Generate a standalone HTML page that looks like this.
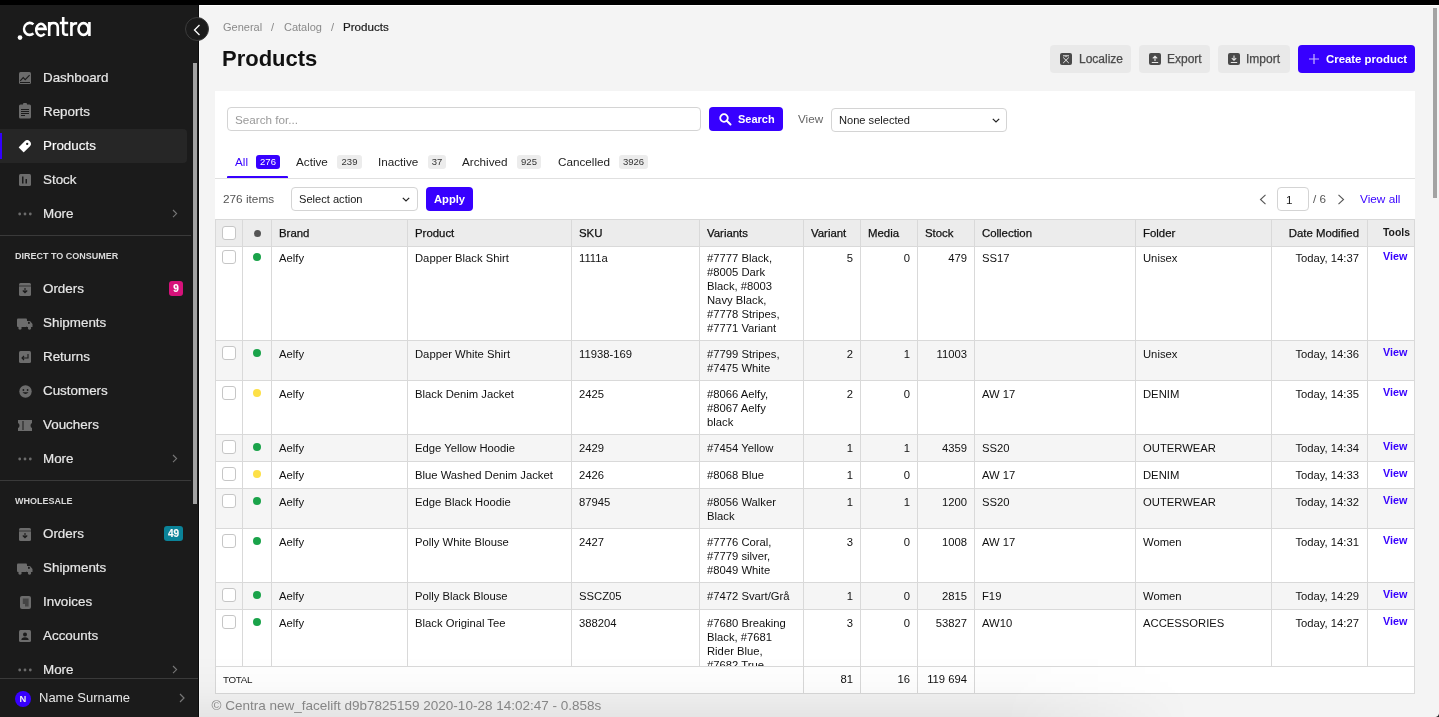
<!DOCTYPE html>
<html><head><meta charset="utf-8"><style>
*{box-sizing:border-box;margin:0;padding:0}
html,body{width:1439px;height:717px;overflow:hidden;background:#f4f4f4;font-family:"Liberation Sans",sans-serif;position:relative}
.a{position:absolute;white-space:nowrap}
#topbar{position:absolute;left:0;top:0;width:1439px;height:5px;background:#000;z-index:50}
#side{position:absolute;left:0;top:0;width:198px;height:717px;background:#1b1b1b;overflow:hidden}
#sideedge{position:absolute;left:198px;top:0;width:1px;height:717px;background:#0c0c0c}
.logo{position:absolute;left:17px;top:13px;color:#fff;font-size:23px;letter-spacing:-0.5px}
.it{position:absolute;left:0;width:187px;height:34px;color:#e6e6e6;font-size:13px;-webkit-text-stroke:0.2px #e6e6e6}
.it .t{position:absolute;left:43px;top:10px;line-height:16px;font-size:13.4px}
.it svg.ic{position:absolute;left:19px;top:12px}
.it.act{background:#262626;border-radius:0 4px 4px 0;color:#fff}
.it.act:before{content:"";position:absolute;left:0;top:4px;width:2px;height:26px;background:#3300ff}
.chev{position:absolute;left:172px;top:12px}
.sep{position:absolute;left:0;width:191px;height:1px;background:#3a3a3a}
.sh{position:absolute;left:15px;font-size:9px;font-weight:700;color:#dadada;line-height:12px}
.badge{position:absolute;top:10px;height:15px;border-radius:3px;color:#fff;font-size:10px;font-weight:700;text-align:center;line-height:15px}
#sscroll{position:absolute;left:193px;top:63px;width:4px;height:441px;background:#a3a3a3}
#collapse{position:absolute;left:185px;top:16.5px;width:24px;height:24px;border-radius:50%;background:#1b1b1b;border:1px solid #3c3c3c;z-index:20}
#user{position:absolute;left:0;top:678px;width:198px;height:39px;background:#1b1b1b;border-top:1px solid #3a3a3a}

#main{position:absolute;left:199px;top:5px;width:1240px;height:712px;background:#f4f4f4;border-top:1px solid #fff;border-left:1px solid #fafafa}
.bc{position:absolute;top:20px;font-size:11px;color:#8a8a8a;line-height:14px}
.title{position:absolute;left:222px;top:46px;font-size:22px;font-weight:700;color:#111;line-height:26px}
.hbtn{position:absolute;top:45px;height:28px;border-radius:4px;background:#e9e9e9;color:#4a4a4a;font-size:12px;line-height:29px;-webkit-text-stroke:0.25px #4a4a4a}
.hbtn svg{position:absolute;left:10px;top:8px}
.hbtn span{position:absolute;top:0}
.card{position:absolute;left:215px;top:91px;width:1200px;height:603px;background:#fff}
.inp{position:absolute;border:1px solid #d4d4d4;border-radius:4px;background:#fff}
.bbtn{position:absolute;background:#3700ff;border-radius:4px;color:#fff;font-weight:700}
.tab{position:absolute;top:154px;font-size:11.7px;color:#222;line-height:15px}
.tbadge{position:absolute;top:155px;height:14px;border-radius:3px;font-size:9.5px;line-height:14px;text-align:center;background:#ececec;color:#333}
.grid{position:absolute;left:215px;top:219px;width:1200px;height:474px;overflow:hidden}
.c{position:absolute;font-size:11.25px;line-height:14px;color:#111;white-space:nowrap}
.r{text-align:right}
.vl{position:absolute;width:1px;background:#d9d9d9}
.hl{position:absolute;height:1px;background:#d9d9d9}
.cb{position:absolute;width:14px;height:14px;border:1px solid #c6c6c6;border-radius:3px;background:#fff}
.dot{position:absolute;width:8px;height:8px;border-radius:50%}
</style></head><body><div id="wrap" style="position:absolute;left:0;top:0;width:1439px;height:717px;will-change:transform">
<div id="main"></div>
<div class="a" style="left:1433px;top:8px;width:4px;height:190px;background:#a3a3a3;z-index:30"></div>
<div class="bc" style="left:223px">General</div>
<div class="bc" style="left:271px">/</div>
<div class="bc" style="left:284px">Catalog</div>
<div class="bc" style="left:331px">/</div>
<div class="bc" style="left:343px;color:#1a1a1a;font-size:11.6px;-webkit-text-stroke:0.2px #1a1a1a">Products</div>
<div class="title">Products</div>
<div class="hbtn" style="left:1050px;width:81px"><svg width="12" height="12" viewBox="0 0 12 12"><rect width="12" height="12" rx="2" fill="#4a4a4a"/><path d="M3 2.8 H9 M6 2.8 V4.2 M3.2 10 L8.8 4.5 M3.2 4.5 L8.8 10" stroke="#e9e9e9" stroke-width="1" fill="none"/></svg><span style="left:29px">Localize</span></div>
<div class="hbtn" style="left:1139px;width:71px"><svg width="12" height="12" viewBox="0 0 12 12"><rect width="12" height="12" rx="2" fill="#4a4a4a"/><path d="M6 8 V3.2 M3.8 5.4 L6 3.2 L8.2 5.4 M2.8 9.5 H9.2" stroke="#e9e9e9" stroke-width="1.1" fill="none"/></svg><span style="left:28px">Export</span></div>
<div class="hbtn" style="left:1218px;width:72px"><svg width="12" height="12" viewBox="0 0 12 12"><rect width="12" height="12" rx="2" fill="#4a4a4a"/><path d="M6 2.5 V7.3 M3.8 5.1 L6 7.3 L8.2 5.1 M2.8 9.5 H9.2" stroke="#e9e9e9" stroke-width="1.1" fill="none"/></svg><span style="left:28px">Import</span></div>
<div class="bbtn" style="left:1298px;top:45px;width:117px;height:28px"><svg class="a" style="left:11px;top:9px" width="10" height="10" viewBox="0 0 10 10"><path d="M5 0 V10 M0 5 H10" stroke="#c8b8ff" stroke-width="1.2"/></svg><span class="a" style="left:28px;top:7px;font-size:11.4px;line-height:14px">Create product</span></div>
<div class="card"></div>
<div class="inp" style="left:227px;top:107px;width:474px;height:24px"><span class="a" style="left:7px;top:3.5px;font-size:11.7px;color:#9a9a9a;line-height:15px">Search for...</span></div>
<div class="bbtn" style="left:709px;top:107px;width:74px;height:24px"><svg class="a" style="left:10px;top:6px" width="13" height="13" viewBox="0 0 13 13"><circle cx="5" cy="5" r="3.8" fill="none" stroke="#fff" stroke-width="1.8"/><path d="M7.8 7.8 L11.5 11.5" stroke="#fff" stroke-width="2" stroke-linecap="round"/></svg><span class="a" style="left:29px;top:5px;font-size:11px;line-height:14px">Search</span></div>
<div class="a" style="left:798px;top:112px;font-size:11.7px;color:#666;line-height:14px">View</div>
<div class="inp" style="left:831px;top:108px;width:176px;height:24px"><span class="a" style="left:7px;top:4px;font-size:11.1px;color:#1a1a1a;line-height:15px">None selected</span><svg class="a" style="left:160px;top:9px" width="8" height="5" viewBox="0 0 8 5"><path d="M0.8 0.8 L4 4 L7.2 0.8" fill="none" stroke="#222" stroke-width="1.2"/></svg></div>
<div class="tab" style="left:235px;color:#3700ff">All</div>
<div class="tbadge" style="left:256px;width:24px;background:#3700ff;color:#fff">276</div>
<div class="tab" style="left:296px;color:#222">Active</div>
<div class="tbadge" style="left:337px;width:25px">239</div>
<div class="tab" style="left:378px;color:#222">Inactive</div>
<div class="tbadge" style="left:428px;width:18px">37</div>
<div class="tab" style="left:462px;color:#222">Archived</div>
<div class="tbadge" style="left:517px;width:24px">925</div>
<div class="tab" style="left:558px;color:#222">Cancelled</div>
<div class="tbadge" style="left:619px;width:29px">3926</div>
<div class="a" style="left:227px;top:176px;width:61px;height:2px;background:#3700ff;border-radius:1px 1px 0 0"></div>
<div class="a" style="left:215px;top:178px;width:1200px;height:1px;background:#e0e0e0"></div>
<div class="a" style="left:223px;top:192px;font-size:11.8px;color:#555;line-height:14px">276 items</div>
<div class="inp" style="left:291px;top:187px;width:127px;height:24px"><span class="a" style="left:7px;top:4px;font-size:11.1px;color:#1a1a1a;line-height:15px">Select action</span><svg class="a" style="left:110px;top:9px" width="8" height="5" viewBox="0 0 8 5"><path d="M0.8 0.8 L4 4 L7.2 0.8" fill="none" stroke="#222" stroke-width="1.2"/></svg></div>
<div class="bbtn" style="left:426px;top:187px;width:47px;height:24px"><span class="a" style="left:8px;top:5px;font-size:11.2px;line-height:14px">Apply</span></div>
<svg class="a" style="left:1259px;top:194px" width="8" height="11" viewBox="0 0 8 11"><path d="M6.5 0.8 L1.5 5.5 L6.5 10.2" fill="none" stroke="#555" stroke-width="1.1"/></svg>
<div class="inp" style="left:1277px;top:187px;width:32px;height:24px"><span class="a" style="left:8px;top:4px;font-size:11.7px;color:#1a1a1a;line-height:15px">1</span></div>
<div class="a" style="left:1313px;top:192px;font-size:11.7px;color:#555;line-height:14px">/ 6</div>
<svg class="a" style="left:1337px;top:194px" width="8" height="11" viewBox="0 0 8 11"><path d="M1.5 0.8 L6.5 5.5 L1.5 10.2" fill="none" stroke="#555" stroke-width="1.1"/></svg>
<div class="a" style="left:1360px;top:192px;font-size:11.8px;color:#3700ff;line-height:14px">View all</div>
<div class="a" style="left:215px;top:219px;width:1200px;height:27px;background:#ececec"></div>
<div class="a" style="left:215px;top:340px;width:1200px;height:40px;background:#f5f5f5"></div>
<div class="a" style="left:215px;top:434px;width:1200px;height:27px;background:#f5f5f5"></div>
<div class="a" style="left:215px;top:488px;width:1200px;height:40px;background:#f5f5f5"></div>
<div class="a" style="left:215px;top:582px;width:1200px;height:27px;background:#f5f5f5"></div>
<div class="hl" style="left:215px;top:219px;width:1200px"></div>
<div class="hl" style="left:215px;top:246px;width:1200px"></div>
<div class="hl" style="left:215px;top:340px;width:1200px"></div>
<div class="hl" style="left:215px;top:380px;width:1200px"></div>
<div class="hl" style="left:215px;top:434px;width:1200px"></div>
<div class="hl" style="left:215px;top:461px;width:1200px"></div>
<div class="hl" style="left:215px;top:488px;width:1200px"></div>
<div class="hl" style="left:215px;top:528px;width:1200px"></div>
<div class="hl" style="left:215px;top:582px;width:1200px"></div>
<div class="hl" style="left:215px;top:609px;width:1200px"></div>
<div class="hl" style="left:215px;top:666px;width:1200px"></div>
<div class="hl" style="left:215px;top:693px;width:1200px"></div>
<div class="vl" style="left:215px;top:219px;height:475px"></div>
<div class="vl" style="left:242px;top:219px;height:448px"></div>
<div class="vl" style="left:271px;top:219px;height:448px"></div>
<div class="vl" style="left:407px;top:219px;height:448px"></div>
<div class="vl" style="left:571px;top:219px;height:448px"></div>
<div class="vl" style="left:699px;top:219px;height:448px"></div>
<div class="vl" style="left:803px;top:219px;height:475px"></div>
<div class="vl" style="left:860px;top:219px;height:475px"></div>
<div class="vl" style="left:917px;top:219px;height:475px"></div>
<div class="vl" style="left:974px;top:219px;height:475px"></div>
<div class="vl" style="left:1135px;top:219px;height:448px"></div>
<div class="vl" style="left:1271px;top:219px;height:448px"></div>
<div class="vl" style="left:1367px;top:219px;height:448px"></div>
<div class="vl" style="left:1414px;top:219px;height:475px"></div>
<div class="cb" style="left:222px;top:226px"></div>
<div class="dot" style="left:254px;top:230px;width:7px;height:7px;background:#555"></div>
<div class="c" style="left:279px;top:226px;font-size:11.4px;color:#111;-webkit-text-stroke:0.25px #111">Brand</div>
<div class="c" style="left:415px;top:226px;font-size:11.4px;color:#111;-webkit-text-stroke:0.25px #111">Product</div>
<div class="c" style="left:579px;top:226px;font-size:11.4px;color:#111;-webkit-text-stroke:0.25px #111">SKU</div>
<div class="c" style="left:707px;top:226px;font-size:11.4px;color:#111;-webkit-text-stroke:0.25px #111">Variants</div>
<div class="c" style="left:811px;top:226px;font-size:11.4px;color:#111;-webkit-text-stroke:0.25px #111">Variant</div>
<div class="c" style="left:868px;top:226px;font-size:11.4px;color:#111;-webkit-text-stroke:0.25px #111">Media</div>
<div class="c" style="left:925px;top:226px;font-size:11.4px;color:#111;-webkit-text-stroke:0.25px #111">Stock</div>
<div class="c" style="left:982px;top:226px;font-size:11.4px;color:#111;-webkit-text-stroke:0.25px #111">Collection</div>
<div class="c" style="left:1143px;top:226px;font-size:11.4px;color:#111;-webkit-text-stroke:0.25px #111">Folder</div>
<div class="c" style="left:1272px;width:87px;top:226px;text-align:right;font-size:11.4px;color:#111;-webkit-text-stroke:0.25px #111">Date Modified</div>
<div class="c" style="left:1383px;top:226px;font-size:10.4px;font-weight:700;color:#1a1a1a">Tools</div>
<div class="cb" style="left:222px;top:250px"></div>
<div class="dot" style="left:253px;top:253px;background:#1aa34a"></div>
<div class="c" style="left:279px;top:251px;">Aelfy</div>
<div class="c" style="left:415px;top:251px;">Dapper Black Shirt</div>
<div class="c" style="left:579px;top:251px;">1111a</div>
<div class="c" style="left:707px;top:251px;">#7777 Black,<br>#8005 Dark<br>Black, #8003<br>Navy Black,<br>#7778 Stripes,<br>#7771 Variant</div>
<div class="c r" style="left:804px;width:49px;top:251px">5</div>
<div class="c r" style="left:861px;width:49px;top:251px">0</div>
<div class="c r" style="left:918px;width:49px;top:251px">479</div>
<div class="c" style="left:982px;top:251px;">SS17</div>
<div class="c" style="left:1143px;top:251px;">Unisex</div>
<div class="c r" style="left:1272px;width:87px;top:251px">Today, 14:37</div>
<div class="c" style="left:1383px;top:249px;color:#3700ff;font-size:10.8px;font-weight:700">View</div>
<div class="cb" style="left:222px;top:346px"></div>
<div class="dot" style="left:253px;top:349px;background:#1aa34a"></div>
<div class="c" style="left:279px;top:347px;">Aelfy</div>
<div class="c" style="left:415px;top:347px;">Dapper White Shirt</div>
<div class="c" style="left:579px;top:347px;">11938-169</div>
<div class="c" style="left:707px;top:347px;">#7799 Stripes,<br>#7475 White</div>
<div class="c r" style="left:804px;width:49px;top:347px">2</div>
<div class="c r" style="left:861px;width:49px;top:347px">1</div>
<div class="c r" style="left:918px;width:49px;top:347px">11003</div>
<div class="c" style="left:982px;top:347px;"></div>
<div class="c" style="left:1143px;top:347px;">Unisex</div>
<div class="c r" style="left:1272px;width:87px;top:347px">Today, 14:36</div>
<div class="c" style="left:1383px;top:345px;color:#3700ff;font-size:10.8px;font-weight:700">View</div>
<div class="cb" style="left:222px;top:386px"></div>
<div class="dot" style="left:253px;top:389px;background:#fde047"></div>
<div class="c" style="left:279px;top:387px;">Aelfy</div>
<div class="c" style="left:415px;top:387px;">Black Denim Jacket</div>
<div class="c" style="left:579px;top:387px;">2425</div>
<div class="c" style="left:707px;top:387px;">#8066 Aelfy,<br>#8067 Aelfy<br>black</div>
<div class="c r" style="left:804px;width:49px;top:387px">2</div>
<div class="c r" style="left:861px;width:49px;top:387px">0</div>
<div class="c r" style="left:918px;width:49px;top:387px"></div>
<div class="c" style="left:982px;top:387px;">AW 17</div>
<div class="c" style="left:1143px;top:387px;">DENIM</div>
<div class="c r" style="left:1272px;width:87px;top:387px">Today, 14:35</div>
<div class="c" style="left:1383px;top:385px;color:#3700ff;font-size:10.8px;font-weight:700">View</div>
<div class="cb" style="left:222px;top:440px"></div>
<div class="dot" style="left:253px;top:443px;background:#1aa34a"></div>
<div class="c" style="left:279px;top:441px;">Aelfy</div>
<div class="c" style="left:415px;top:441px;">Edge Yellow Hoodie</div>
<div class="c" style="left:579px;top:441px;">2429</div>
<div class="c" style="left:707px;top:441px;">#7454 Yellow</div>
<div class="c r" style="left:804px;width:49px;top:441px">1</div>
<div class="c r" style="left:861px;width:49px;top:441px">1</div>
<div class="c r" style="left:918px;width:49px;top:441px">4359</div>
<div class="c" style="left:982px;top:441px;">SS20</div>
<div class="c" style="left:1143px;top:441px;">OUTERWEAR</div>
<div class="c r" style="left:1272px;width:87px;top:441px">Today, 14:34</div>
<div class="c" style="left:1383px;top:439px;color:#3700ff;font-size:10.8px;font-weight:700">View</div>
<div class="cb" style="left:222px;top:467px"></div>
<div class="dot" style="left:253px;top:470px;background:#fde047"></div>
<div class="c" style="left:279px;top:468px;">Aelfy</div>
<div class="c" style="left:415px;top:468px;">Blue Washed Denim Jacket</div>
<div class="c" style="left:579px;top:468px;">2426</div>
<div class="c" style="left:707px;top:468px;">#8068 Blue</div>
<div class="c r" style="left:804px;width:49px;top:468px">1</div>
<div class="c r" style="left:861px;width:49px;top:468px">0</div>
<div class="c r" style="left:918px;width:49px;top:468px"></div>
<div class="c" style="left:982px;top:468px;">AW 17</div>
<div class="c" style="left:1143px;top:468px;">DENIM</div>
<div class="c r" style="left:1272px;width:87px;top:468px">Today, 14:33</div>
<div class="c" style="left:1383px;top:466px;color:#3700ff;font-size:10.8px;font-weight:700">View</div>
<div class="cb" style="left:222px;top:494px"></div>
<div class="dot" style="left:253px;top:497px;background:#1aa34a"></div>
<div class="c" style="left:279px;top:495px;">Aelfy</div>
<div class="c" style="left:415px;top:495px;">Edge Black Hoodie</div>
<div class="c" style="left:579px;top:495px;">87945</div>
<div class="c" style="left:707px;top:495px;">#8056 Walker<br>Black</div>
<div class="c r" style="left:804px;width:49px;top:495px">1</div>
<div class="c r" style="left:861px;width:49px;top:495px">1</div>
<div class="c r" style="left:918px;width:49px;top:495px">1200</div>
<div class="c" style="left:982px;top:495px;">SS20</div>
<div class="c" style="left:1143px;top:495px;">OUTERWEAR</div>
<div class="c r" style="left:1272px;width:87px;top:495px">Today, 14:32</div>
<div class="c" style="left:1383px;top:493px;color:#3700ff;font-size:10.8px;font-weight:700">View</div>
<div class="cb" style="left:222px;top:534px"></div>
<div class="dot" style="left:253px;top:537px;background:#1aa34a"></div>
<div class="c" style="left:279px;top:535px;">Aelfy</div>
<div class="c" style="left:415px;top:535px;">Polly White Blouse</div>
<div class="c" style="left:579px;top:535px;">2427</div>
<div class="c" style="left:707px;top:535px;">#7776 Coral,<br>#7779 silver,<br>#8049 White</div>
<div class="c r" style="left:804px;width:49px;top:535px">3</div>
<div class="c r" style="left:861px;width:49px;top:535px">0</div>
<div class="c r" style="left:918px;width:49px;top:535px">1008</div>
<div class="c" style="left:982px;top:535px;">AW 17</div>
<div class="c" style="left:1143px;top:535px;">Women</div>
<div class="c r" style="left:1272px;width:87px;top:535px">Today, 14:31</div>
<div class="c" style="left:1383px;top:533px;color:#3700ff;font-size:10.8px;font-weight:700">View</div>
<div class="cb" style="left:222px;top:588px"></div>
<div class="dot" style="left:253px;top:591px;background:#1aa34a"></div>
<div class="c" style="left:279px;top:589px;">Aelfy</div>
<div class="c" style="left:415px;top:589px;">Polly Black Blouse</div>
<div class="c" style="left:579px;top:589px;">SSCZ05</div>
<div class="c" style="left:707px;top:589px;">#7472 Svart/Grå</div>
<div class="c r" style="left:804px;width:49px;top:589px">1</div>
<div class="c r" style="left:861px;width:49px;top:589px">0</div>
<div class="c r" style="left:918px;width:49px;top:589px">2815</div>
<div class="c" style="left:982px;top:589px;">F19</div>
<div class="c" style="left:1143px;top:589px;">Women</div>
<div class="c r" style="left:1272px;width:87px;top:589px">Today, 14:29</div>
<div class="c" style="left:1383px;top:587px;color:#3700ff;font-size:10.8px;font-weight:700">View</div>
<div class="cb" style="left:222px;top:615px"></div>
<div class="dot" style="left:253px;top:618px;background:#1aa34a"></div>
<div class="c" style="left:279px;top:616px;">Aelfy</div>
<div class="c" style="left:415px;top:616px;">Black Original Tee</div>
<div class="c" style="left:579px;top:616px;">388204</div>
<div class="c" style="left:707px;top:616px;height:50px;overflow:hidden;">#7680 Breaking<br>Black, #7681<br>Rider Blue,<br>#7682 True</div>
<div class="c r" style="left:804px;width:49px;top:616px">3</div>
<div class="c r" style="left:861px;width:49px;top:616px">0</div>
<div class="c r" style="left:918px;width:49px;top:616px">53827</div>
<div class="c" style="left:982px;top:616px;">AW10</div>
<div class="c" style="left:1143px;top:616px;">ACCESSORIES</div>
<div class="c r" style="left:1272px;width:87px;top:616px">Today, 14:27</div>
<div class="c" style="left:1383px;top:614px;color:#3700ff;font-size:10.8px;font-weight:700">View</div>
<div class="c" style="left:223px;top:673px;font-size:9.8px;letter-spacing:-0.3px;color:#1a1a1a">TOTAL</div>
<div class="c r" style="left:804px;width:49px;top:672px">81</div>
<div class="c r" style="left:861px;width:49px;top:672px">16</div>
<div class="c r" style="left:918px;width:49px;top:672px">119 694</div>
<div class="a" style="left:1435px;top:713px;width:4px;height:4px;background:radial-gradient(circle at 0 0, transparent 3.5px, #222 4.5px);z-index:60"></div>
<div class="a" style="left:199px;top:655px;width:1240px;height:62px;background:linear-gradient(to bottom, rgba(0,0,0,0) 0%, rgba(0,0,0,0.015) 50%, rgba(0,0,0,0.06) 100%);-webkit-mask-image:linear-gradient(to right, #000 0%, #000 65%, transparent 80%);z-index:5"></div>
<div class="a" style="left:211.5px;top:698px;font-size:13.5px;color:#8c8c8c;line-height:16px">© Centra new_facelift d9b7825159 2020-10-28 14:02:47 - 0.858s</div>
<div id="side">
<svg class="a" style="left:0;top:0" width="100" height="45" viewBox="0 0 100 45">
<g fill="none" stroke="#fff" stroke-width="2.6">
<path d="M33.4 24.4 A5.6 6 0 1 0 33.4 33.4"/>
<path d="M36.2 28.9 H45.6 A4.75 6 0 1 0 44.6 33.6"/>
<path d="M49.2 36 V22 M49.2 27.5 Q49.2 23 53.5 23 Q57.8 23 57.8 27.5 V36"/>
<path d="M63.2 17.1 V32 Q63.2 34.8 66 34.8 H68.2 M59.8 23 H68.2"/>
<path d="M71.4 36 V22 M71.4 27.5 Q71.6 23.2 77.2 23.2"/>
<ellipse cx="83.5" cy="29" rx="5" ry="5.9"/>
<path d="M89.4 22 V36"/>
</g>
<circle cx="20" cy="37.6" r="2.35" fill="#fff"/>
</svg>
<div class="it" style="top:60px"><svg class="ic" width="12" height="12" viewBox="0 0 12 12"><rect x="0" y="0" width="12" height="12" rx="1.5" fill="#6c6c6c"/><polyline points="1.2,8.8 4.2,5.6 6.2,7.6 10.6,3.2" fill="none" stroke="#1b1b1b" stroke-width="1.1"/><line x1="1" y1="10.5" x2="11" y2="10.5" stroke="#1b1b1b" stroke-width="1"/></svg><span class="t">Dashboard</span></div>
<div class="it" style="top:94px"><svg class="ic" width="13" height="16" viewBox="0 0 13 16" style="top:9px"><rect x="0" y="1.5" width="12" height="14" rx="1.5" fill="#6c6c6c"/><rect x="4" y="0" width="4" height="3" rx="1" fill="#6c6c6c"/><path d="M2 6.5 H10 M2 8.5 H10 M2 10.5 H10 M2 12.5 H6" stroke="#1b1b1b" stroke-width="1"/></svg><span class="t">Reports</span></div>
<div class="it act" style="top:129px"><svg class="ic" width="16" height="16" viewBox="0 0 16 16" style="left:18px;top:10px"><g transform="translate(9.2 4.9) rotate(-45)"><path d="M-8 -3.6 H0 A3.6 3.6 0 0 1 0 3.6 H-8 Q-8.6 3.6 -8.6 3 V-3 Q-8.6 -3.6 -8 -3.6 Z" fill="#fff"/><circle cx="0" cy="0" r="1.15" fill="#262626"/></g></svg><span class="t" style="top:9px">Products</span></div>
<div class="it" style="top:162px"><svg class="ic" width="12" height="12" viewBox="0 0 12 12"><rect width="12" height="12" rx="1.5" fill="#6c6c6c"/><rect x="3" y="2.5" width="1.5" height="7" fill="#1b1b1b"/><rect x="6.5" y="5" width="1.5" height="4.5" fill="#1b1b1b"/></svg><span class="t">Stock</span></div>
<div class="it" style="top:196px"><svg class="ic" width="14" height="4" viewBox="0 0 14 4" style="left:18px;top:16px"><circle cx="1.7" cy="2" r="1.4" fill="#6c6c6c"/><circle cx="7" cy="2" r="1.4" fill="#6c6c6c"/><circle cx="12.3" cy="2" r="1.4" fill="#6c6c6c"/></svg><span class="t">More</span><svg class="chev" width="6" height="10" viewBox="0 0 6 10"><path d="M1 2 L4.6 5.6 L1 9.2" fill="none" stroke="#777" stroke-width="1.1"/></svg></div>
<div class="sep" style="top:235px"></div>
<div class="sh" style="top:250px">DIRECT TO CONSUMER</div>
<div class="it" style="top:271px"><svg class="ic" width="12" height="13" viewBox="0 0 12 13" style="top:12px"><rect y="0" width="12" height="13" rx="1.5" fill="#6c6c6c"/><line x1="0" y1="3" x2="12" y2="3" stroke="#1b1b1b" stroke-width="0.7"/><path d="M6 5 V9.5 M3.8 7.5 L6 9.7 L8.2 7.5" fill="none" stroke="#1b1b1b" stroke-width="1.1"/></svg><span class="t">Orders</span><span class="badge" style="left:169px;width:14px;background:#d6127a">9</span></div>
<div class="it" style="top:305px"><svg class="ic" width="16" height="12" viewBox="0 0 16 12" style="left:17px;top:12.5px"><rect x="0" y="0.5" width="10" height="8.5" rx="1" fill="#6c6c6c"/><path d="M10 3 H13 L15.5 6 V9 H10 Z" fill="#6c6c6c"/><circle cx="3" cy="10" r="1.7" fill="#6c6c6c"/><circle cx="12.5" cy="10" r="1.7" fill="#6c6c6c"/><rect x="11" y="3.8" width="1.8" height="2" fill="#1b1b1b"/></svg><span class="t">Shipments</span></div>
<div class="it" style="top:339px"><svg class="ic" width="12" height="12" viewBox="0 0 12 12"><rect width="12" height="12" rx="1.5" fill="#6c6c6c"/><path d="M9 3 V7 H3 M5 5 L3 7 L5 9" fill="none" stroke="#1b1b1b" stroke-width="1.1"/></svg><span class="t">Returns</span></div>
<div class="it" style="top:373px"><svg class="ic" width="13" height="13" viewBox="0 0 13 13" style="top:11.5px"><circle cx="6.5" cy="6.5" r="6.2" fill="#6c6c6c"/><circle cx="4.4" cy="5" r="0.9" fill="#1b1b1b"/><circle cx="8.6" cy="5" r="0.9" fill="#1b1b1b"/><path d="M3.5 7.3 Q6.5 10.8 9.5 7.3 Z" fill="#1b1b1b"/></svg><span class="t">Customers</span></div>
<div class="it" style="top:407px"><svg class="ic" width="14" height="11" viewBox="0 0 14 11" style="left:18px;top:12.5px"><path d="M0 0 H14 V3 Q12.5 3.5 12.5 5.5 Q12.5 7.5 14 8 V11 H0 V8 Q1.5 7.5 1.5 5.5 Q1.5 3.5 0 3 Z" fill="#6c6c6c"/><line x1="5" y1="1" x2="5" y2="10" stroke="#1b1b1b" stroke-width="1"/></svg><span class="t">Vouchers</span></div>
<div class="it" style="top:441px"><svg class="ic" width="14" height="4" viewBox="0 0 14 4" style="left:18px;top:16px"><circle cx="1.7" cy="2" r="1.4" fill="#6c6c6c"/><circle cx="7" cy="2" r="1.4" fill="#6c6c6c"/><circle cx="12.3" cy="2" r="1.4" fill="#6c6c6c"/></svg><span class="t">More</span><svg class="chev" width="6" height="10" viewBox="0 0 6 10"><path d="M1 2 L4.6 5.6 L1 9.2" fill="none" stroke="#777" stroke-width="1.1"/></svg></div>
<div class="sep" style="top:480px"></div>
<div class="sh" style="top:495px">WHOLESALE</div>
<div class="it" style="top:516px"><svg class="ic" width="12" height="13" viewBox="0 0 12 13" style="top:12px"><rect y="0" width="12" height="13" rx="1.5" fill="#6c6c6c"/><line x1="0" y1="3" x2="12" y2="3" stroke="#1b1b1b" stroke-width="0.7"/><path d="M6 5 V9.5 M3.8 7.5 L6 9.7 L8.2 7.5" fill="none" stroke="#1b1b1b" stroke-width="1.1"/></svg><span class="t">Orders</span><span class="badge" style="left:164px;width:19px;background:#0b8399">49</span></div>
<div class="it" style="top:550px"><svg class="ic" width="16" height="12" viewBox="0 0 16 12" style="left:17px;top:12.5px"><rect x="0" y="0.5" width="10" height="8.5" rx="1" fill="#6c6c6c"/><path d="M10 3 H13 L15.5 6 V9 H10 Z" fill="#6c6c6c"/><circle cx="3" cy="10" r="1.7" fill="#6c6c6c"/><circle cx="12.5" cy="10" r="1.7" fill="#6c6c6c"/><rect x="11" y="3.8" width="1.8" height="2" fill="#1b1b1b"/></svg><span class="t">Shipments</span></div>
<div class="it" style="top:584px"><svg class="ic" width="12" height="13" viewBox="0 0 12 13" style="top:11.5px;left:19.5px"><rect width="11" height="13" rx="2" fill="#6c6c6c"/><path d="M2.8 2.6 H8.6 V10.4 H5 V8 H2.8 Z" fill="#444"/></svg><span class="t">Invoices</span></div>
<div class="it" style="top:618px"><svg class="ic" width="12" height="12" viewBox="0 0 12 12"><rect width="12" height="12" rx="1.5" fill="#6c6c6c"/><circle cx="6" cy="4.6" r="2" fill="#1b1b1b"/><path d="M2.3 10 Q2.5 7.3 6 7.3 Q9.5 7.3 9.7 10 Z" fill="#1b1b1b"/></svg><span class="t">Accounts</span></div>
<div class="it" style="top:652px"><svg class="ic" width="14" height="4" viewBox="0 0 14 4" style="left:18px;top:16px"><circle cx="1.7" cy="2" r="1.4" fill="#6c6c6c"/><circle cx="7" cy="2" r="1.4" fill="#6c6c6c"/><circle cx="12.3" cy="2" r="1.4" fill="#6c6c6c"/></svg><span class="t">More</span><svg class="chev" width="6" height="10" viewBox="0 0 6 10"><path d="M1 2 L4.6 5.6 L1 9.2" fill="none" stroke="#777" stroke-width="1.1"/></svg></div>
<div id="sscroll"></div>
<div id="user"><div class="a" style="left:15px;top:12px;width:16px;height:16px;border-radius:50%;background:#3700ff;color:#eee;font-size:9.4px;font-weight:700;text-align:center;line-height:16px">N</div><div class="a" style="left:39px;top:11px;font-size:13px;color:#e6e6e6;line-height:16px">Name Surname</div><svg class="a" style="left:179px;top:14px" width="6" height="10" viewBox="0 0 6 10"><path d="M1 1 L5 5 L1 9" fill="none" stroke="#777" stroke-width="1.2"/></svg></div>
</div>
<div id="sideedge"></div>
<div id="collapse"><svg class="a" style="left:6.5px;top:6px" width="8" height="12" viewBox="0 0 8 12"><path d="M6.5 1 L1.5 6 L6.5 11" fill="none" stroke="#fff" stroke-width="1.3"/></svg></div>
<div id="topbar"></div>
</div></body></html>
